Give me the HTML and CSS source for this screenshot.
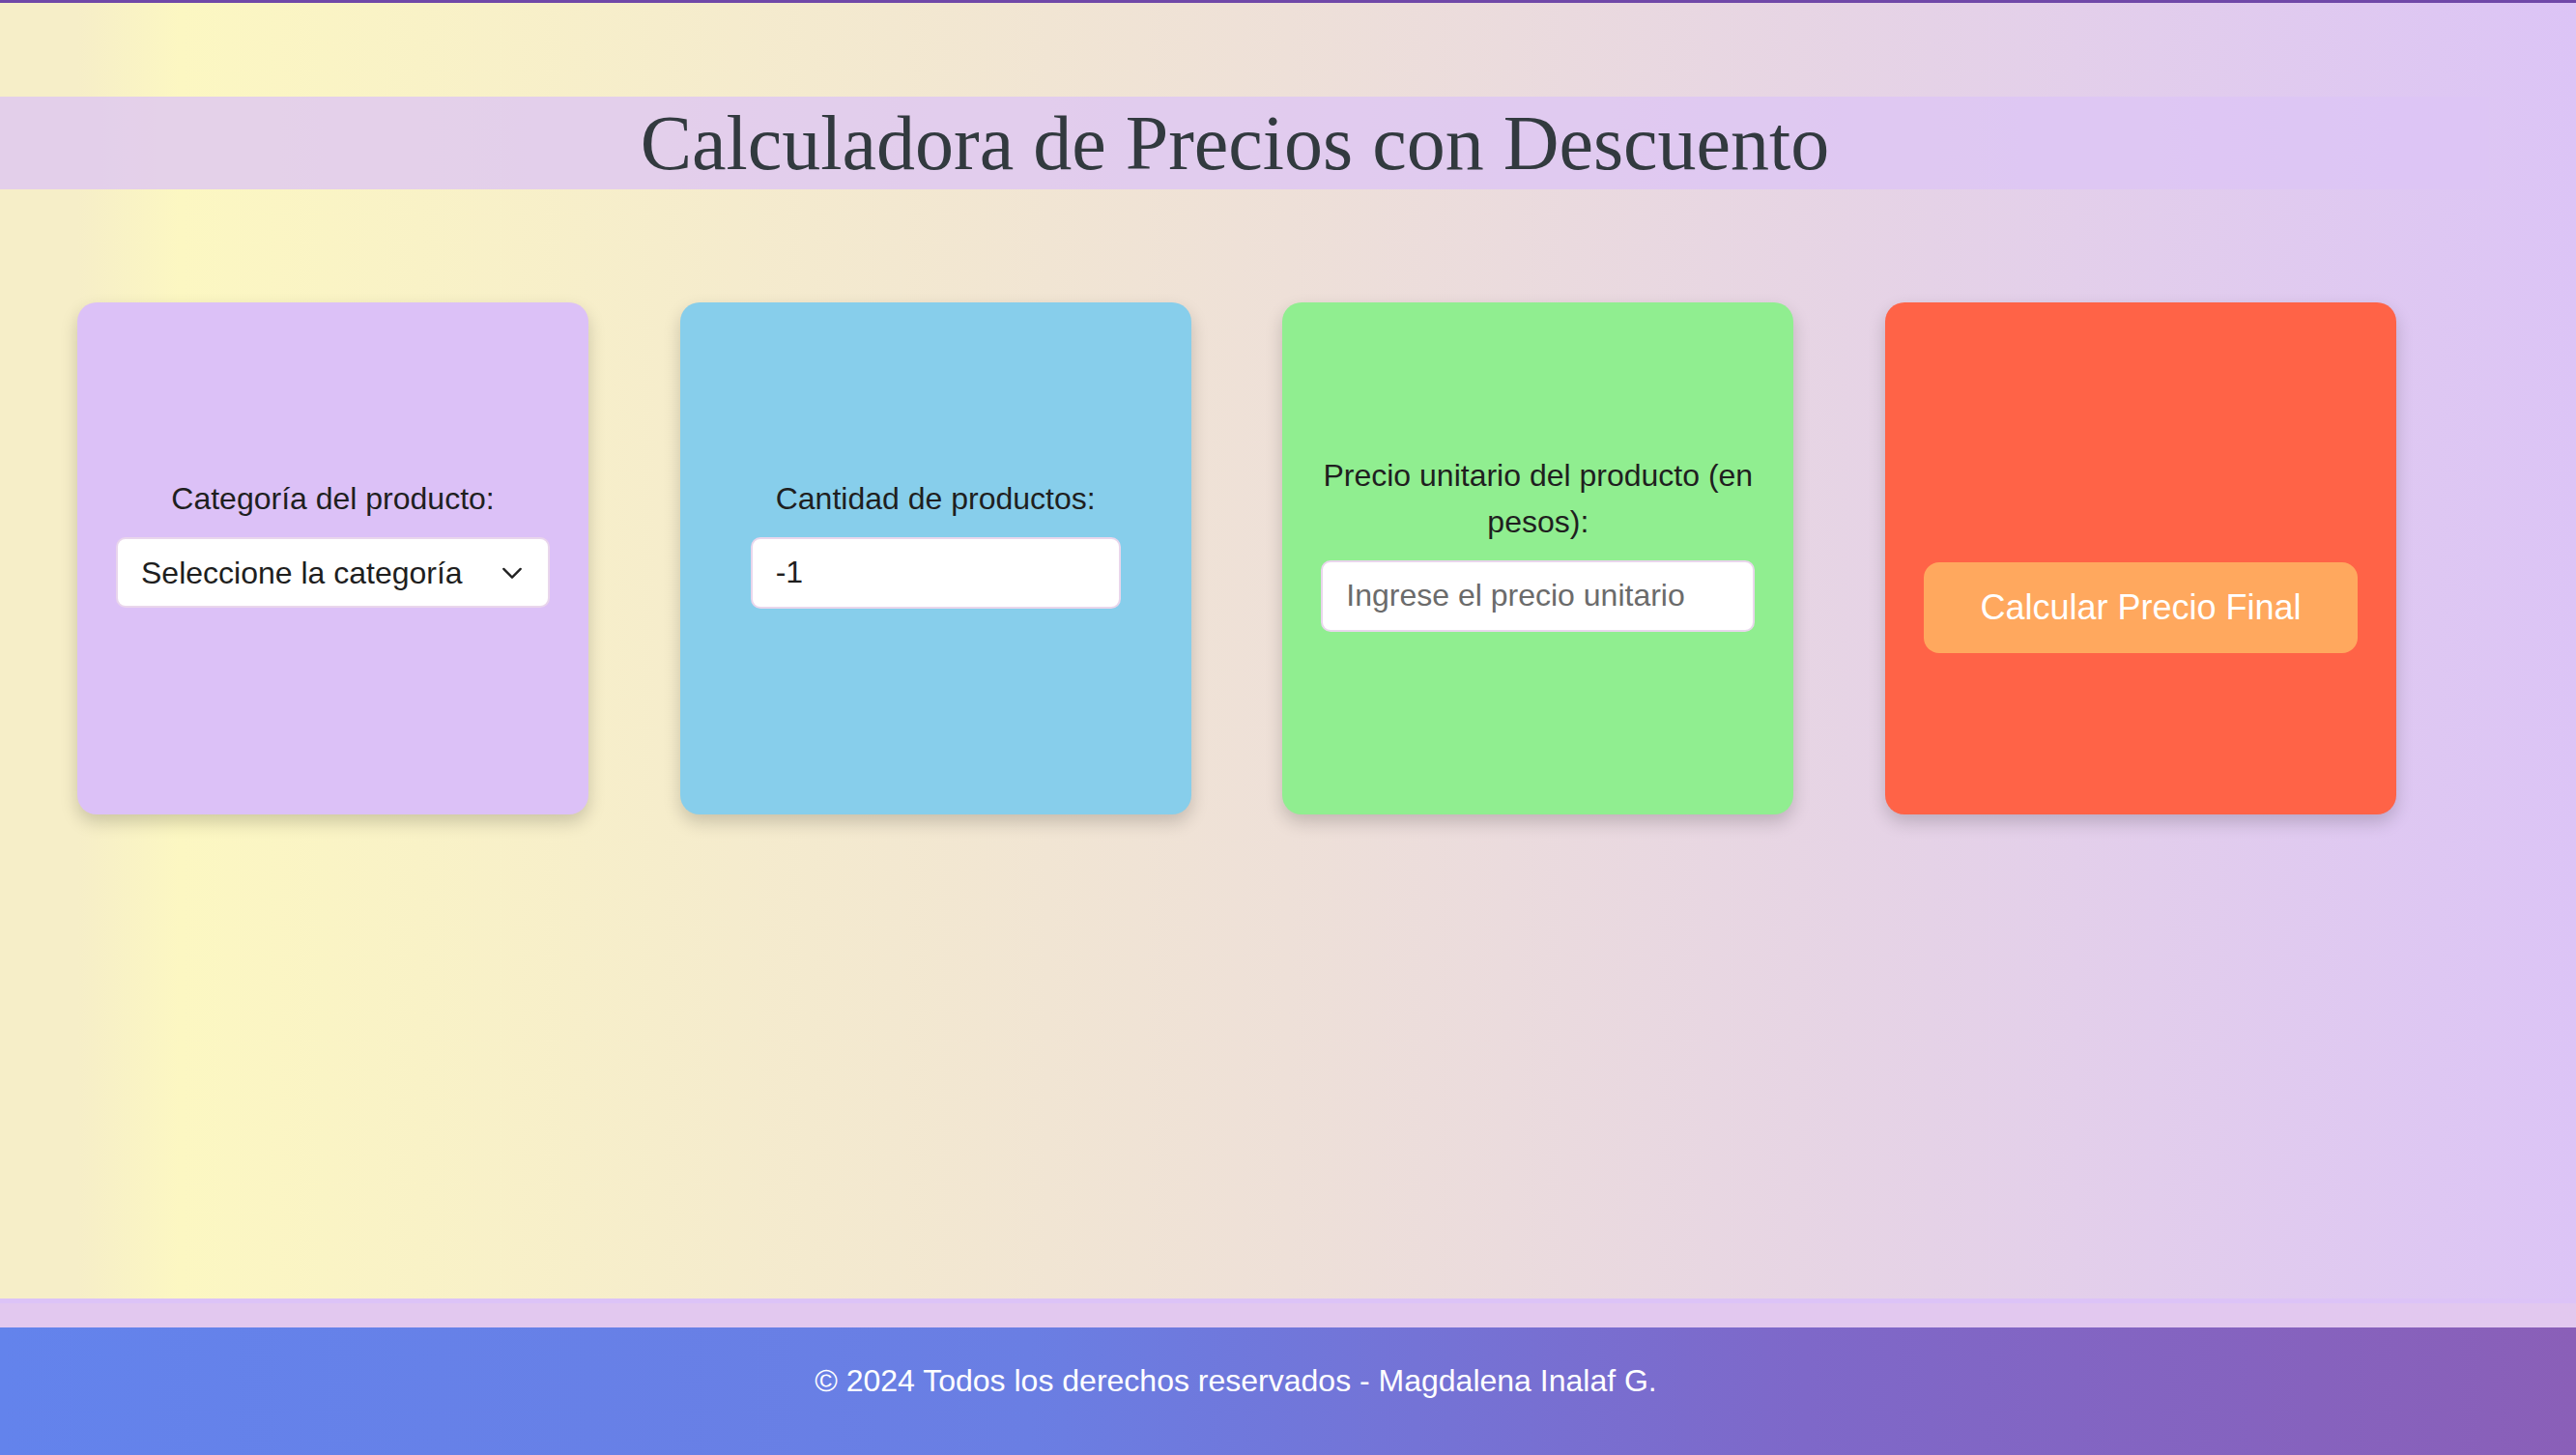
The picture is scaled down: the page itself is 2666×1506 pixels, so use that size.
FILE: index.html
```html
<!DOCTYPE html>
<html lang="es">
<head>
<meta charset="utf-8">
<title>Calculadora de Precios con Descuento</title>
<link rel="stylesheet" href="styles.css">
</head>
<body>
  <header class="site-header">
    <h1 class="title">Calculadora de Precios con Descuento</h1>
  </header>
  <main class="main">
    <div class="cards">
      <section class="card card-purple">
        <div class="field">
          <label class="label" for="categoria">Categoría del producto:</label>
          <div class="select-wrap">
            <select id="categoria" class="control select">
              <option>Seleccione la categoría</option>
            </select>
            <svg class="chevron" viewBox="0 0 24 14" aria-hidden="true"><path d="M2.5 2 L12 11.5 L21.5 2" fill="none" stroke="#222" stroke-width="2.6" stroke-linecap="round" stroke-linejoin="round"/></svg>
          </div>
        </div>
      </section>
      <section class="card card-blue">
        <div class="field">
          <label class="label" for="cantidad">Cantidad de productos:</label>
          <input id="cantidad" class="control control-narrow" type="text" value="-1">
        </div>
      </section>
      <section class="card card-green">
        <div class="field">
          <label class="label" for="precio">Precio unitario del producto (en pesos):</label>
          <input id="precio" class="control" type="text" placeholder="Ingrese el precio unitario">
        </div>
      </section>
      <section class="card card-red">
        <button class="btn" type="button">Calcular Precio Final</button>
      </section>
    </div>
  </main>
  <div class="strip"></div>
  <footer class="site-footer">
    <p class="footer-text">© 2024 Todos los derechos reservados - Magdalena Inalaf G.</p>
  </footer>
</body>
</html>
```

FILE: styles.css
```css
* { box-sizing: border-box; }

html, body { height: 100%; }

body {
  margin: 0;
  min-height: 100vh;
  display: flex;
  flex-direction: column;
  border-top: 3px solid #7048a8;
  background: linear-gradient(to right, #f6eec8 0%, #f6eec8 3%, #fcf7c2 7%, #eee0d8 50%, #dcc4f6 100%);
  font-family: "Liberation Sans", Arial, sans-serif;
  color: #222;
}

.site-header {
  margin-top: 97px;
  width: 2576px;
  height: 96px;
  background: rgba(220, 196, 245, 0.75);
  padding-right: 20px;
}

.title {
  margin: 0;
  font-family: "Liberation Serif", "Times New Roman", serif;
  font-weight: normal;
  font-size: 80px;
  line-height: 96px;
  text-align: center;
  color: #323a3f;
}

.main {
  flex: 1;
  padding-top: 117px;
}

.cards {
  display: flex;
  gap: 94.67px;
  padding-left: 80px;
}

.card {
  width: 529px;
  height: 530px;
  border-radius: 20px;
  padding: 0 40px;
  display: flex;
  flex-direction: column;
  justify-content: center;
  box-shadow: 0 8px 18px rgba(0, 0, 0, 0.18);
}

.card-purple { background: #dcc1f7; }
.card-blue { background: #87ceeb; }
.card-green { background: #90ee90; }
.card-red { background: #ff6347; }

.field {
  display: flex;
  flex-direction: column;
  align-items: center;
  padding-bottom: 35px;
}

.label {
  display: block;
  font-size: 32px;
  line-height: 48px;
  text-align: center;
  margin-bottom: 16px;
  color: #1f1f1f;
}

.control {
  width: 100%;
  height: 74px;
  border: 2px solid #e9d6ec;
  border-radius: 10px;
  background: #fff;
  padding: 0 24px;
  font-family: "Liberation Sans", Arial, sans-serif;
  font-size: 32px;
  color: #1e1e1e;
  outline: none;
}

.control::placeholder { color: #6b6b6b; }

.control-narrow { width: 383px; }

.select-wrap {
  position: relative;
  width: 100%;
}

.select {
  appearance: none;
  -webkit-appearance: none;
  display: block;
  height: 73px;
}

.chevron {
  position: absolute;
  right: 28px;
  top: 31px;
  width: 22px;
  height: 13px;
  pointer-events: none;
}

.btn {
  margin-top: 102px;
  width: 100%;
  height: 94px;
  border: none;
  border-radius: 16px;
  background: #ffa85e;
  color: #fff;
  font-family: "Liberation Sans", Arial, sans-serif;
  font-size: 36px;
  cursor: pointer;
}

.strip {
  height: 30px;
  background: #e2c8ef;
  border-top: 5px solid #dcc3f7;
}

.site-footer {
  height: 132px;
  padding-top: 31px;
  padding-right: 108px;
  background: linear-gradient(to right, #6383ec 0%, #6a7ee3 40%, #7e68c9 70%, #8a5fb8 100%);
}

.footer-text {
  margin: 0;
  font-size: 32px;
  line-height: 48px;
  text-align: center;
  color: #fff;
}
```
